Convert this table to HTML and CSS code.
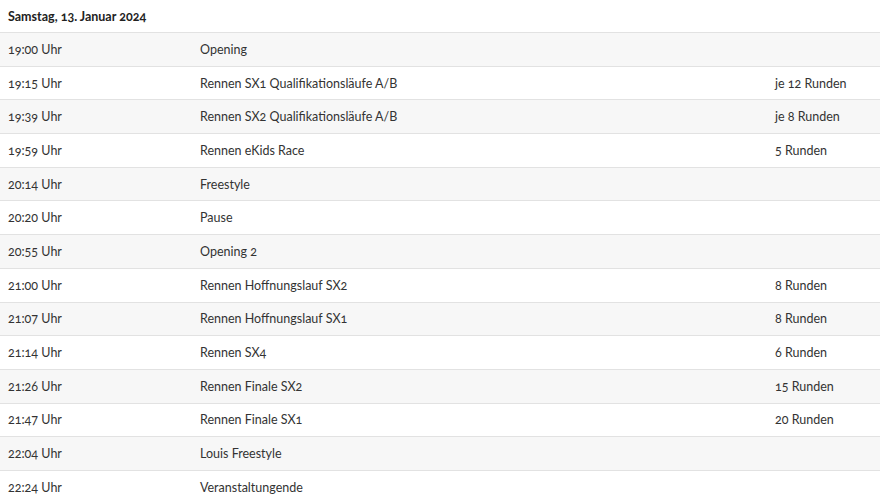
FILE: index.html
```html
<!DOCTYPE html>
<html lang="de">
<head>
  <meta charset="UTF-8" />
  <meta name="viewport" content="width=device-width, initial-scale=1.0"/>
  <title>Zeitplan</title>
  <link rel="stylesheet" href="styles.css">
</head>
<body>

<section class="schedule">
  <h3 class="day">Samstag, 13. Januar 2024</h3>

  <div class="row"><span>19:00 Uhr</span><span>Opening</span><span></span></div>
  <div class="row"><span>19:15 Uhr</span><span>Rennen SX1 Qualifikationsläufe A/B</span><span>je 12 Runden</span></div>
  <div class="row"><span>19:39 Uhr</span><span>Rennen SX2 Qualifikationsläufe A/B</span><span>je 8 Runden</span></div>
  <div class="row"><span>19:59 Uhr</span><span>Rennen eKids Race</span><span>5 Runden</span></div>
  <div class="row"><span>20:14 Uhr</span><span>Freestyle</span><span></span></div>
  <div class="row"><span>20:20 Uhr</span><span>Pause</span><span></span></div>
  <div class="row"><span>20:55 Uhr</span><span>Opening 2</span><span></span></div>
  <div class="row"><span>21:00 Uhr</span><span>Rennen Hoffnungslauf SX2</span><span>8 Runden</span></div>
  <div class="row"><span>21:07 Uhr</span><span>Rennen Hoffnungslauf SX1</span><span>8 Runden</span></div>
  <div class="row"><span>21:14 Uhr</span><span>Rennen SX4</span><span>6 Runden</span></div>
  <div class="row"><span>21:26 Uhr</span><span>Rennen Finale SX2</span><span>15 Runden</span></div>
  <div class="row"><span>21:47 Uhr</span><span>Rennen Finale SX1</span><span>20 Runden</span></div>
  <div class="row"><span>22:04 Uhr</span><span>Louis Freestyle</span><span></span></div>
  <div class="row"><span>22:24 Uhr</span><span>Veranstaltungende</span><span></span></div>
</section>

</body>
</html>
```

FILE: styles.css
```css
* {
  box-sizing: border-box;
}

body {
  margin: 0;
  font-family: Lato, 'Open Sans', sans-serif;
  font-size: 12.5px;
  font-variant-numeric: oldstyle-nums;
  color: #333;
  background: #fff;
}

.day {
  margin: 0;
  height: 32px;
  padding: 9px 8px 0;
  font-size: 12.5px;
  font-weight: 700;
  color: #222;
}

.row {
  display: grid;
  grid-template-columns: 192px 575px 1fr;
  align-items: center;
  height: 33.7px;
  border-top: 1px solid #e2e2e2;
}

.row:nth-child(even) {
  background: #f7f7f7;
}

.row span {
  padding-left: 8px;
}
```
